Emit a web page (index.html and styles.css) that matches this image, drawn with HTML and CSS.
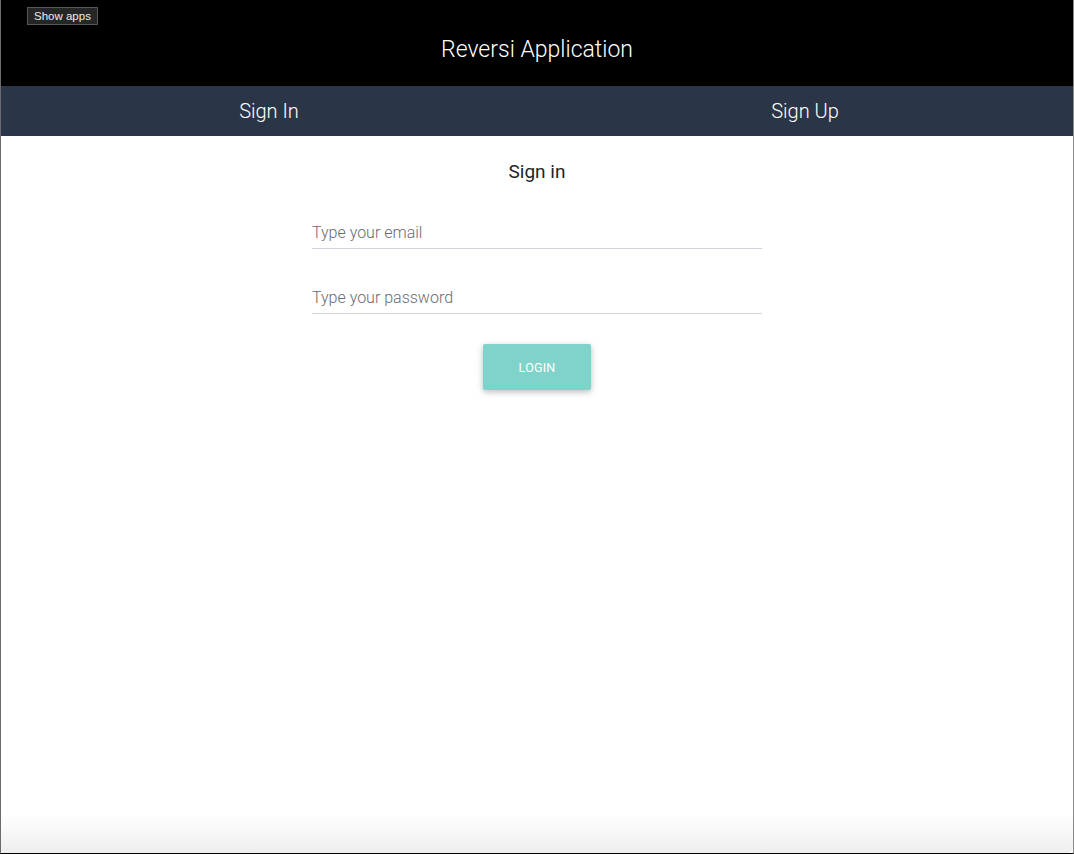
FILE: index.html
```html
<!DOCTYPE html>
<html lang="en">
<head>
<meta charset="utf-8">
<title>Reversi Application</title>
<link rel="stylesheet" href="styles.css">
</head>
<body>
<div class="frame">
  <header class="topbar">
    <div class="topbar-left"><button class="show-apps">Show apps</button></div>
    <h1 class="app-title">Reversi Application</h1>
  </header>
  <nav class="tabs">
    <a class="tab">Sign In</a>
    <a class="tab">Sign Up</a>
  </nav>
  <main class="content">
    <form class="signin">
      <h2 class="signin-title">Sign in</h2>
      <input class="field" type="email" placeholder="Type your email">
      <input class="field" type="password" placeholder="Type your password">
      <button class="login" type="button">LOGIN</button>
    </form>
  </main>
  <div class="bottom-fade"></div>
</div>
</body>
</html>
```
FILE: styles.css
```css
* { box-sizing: border-box; }
html, body { margin: 0; padding: 0; height: 100%; }
body {
  font-family: Roboto, "Liberation Sans", Arial, sans-serif;
  background: #fff;
}
.frame {
  height: 854px;
  display: flex;
  flex-direction: column;
  border-left: 1px solid #6b6b6b;
  border-right: 1px solid #8a8a8a;
  border-bottom: 1px solid #000;
}
.topbar {
  background: #000;
  height: 86px;
  display: flex;
  flex-direction: column;
}
.topbar-left {
  padding: 7px 0 0 26px;
  height: 25px;
  display: flex;
  align-items: flex-start;
}
.show-apps {
  margin: 0;
  font-family: "Liberation Sans", Arial, sans-serif;
  font-size: 11.5px;
  color: #ececec;
  background: #262626;
  border: 1px solid #555;
  padding: 0 6px;
  height: 18px;
  line-height: 16px;
  border-radius: 0;
}
.app-title {
  margin: 0;
  text-align: center;
  color: #fff;
  font-weight: 300;
  font-size: 23px;
  line-height: 28px;
  padding-top: 11px;
}
.tabs {
  background: #2a3647;
  height: 50px;
  display: flex;
}
.tab {
  flex: 1;
  text-align: center;
  color: #fff;
  font-size: 20px;
  font-weight: 300;
  line-height: 50px;
}
.content {
  flex: 1;
  display: flex;
  justify-content: center;
}
.signin {
  width: 450px;
  display: flex;
  flex-direction: column;
  align-items: center;
  padding-top: 25px;
}
.signin-title {
  margin: 0 0 39px;
  font-size: 19px;
  font-weight: 400;
  color: #212529;
  line-height: 22px;
}
.field {
  width: 100%;
  border: none;
  border-bottom: 1px solid #ced4da;
  font-family: Roboto, "Liberation Sans", Arial, sans-serif;
  font-size: 16px;
  font-weight: 300;
  padding: 0 0 5px 0;
  height: 27px;
  margin-bottom: 38px;
  outline: none;
  color: #495057;
}
.field::placeholder { color: #6c6c6c; }
.field + .field { margin-bottom: 30px; }
.login {
  width: 108px;
  height: 46px;
  border: none;
  border-radius: 2px;
  background: #80d3ca;
  color: #fff;
  font-family: Roboto, "Liberation Sans", Arial, sans-serif;
  font-size: 12.5px;
  font-weight: 400;
  letter-spacing: 0.2px;
  box-shadow: 0 2px 5px rgba(0,0,0,0.16), 0 2px 10px rgba(0,0,0,0.12);
}
.bottom-fade {
  height: 40px;
  background: linear-gradient(to bottom, rgba(255,255,255,0), rgba(238,238,238,1));
  border-bottom-right-radius: 6px;
  border-bottom-left-radius: 3px;
}
```
